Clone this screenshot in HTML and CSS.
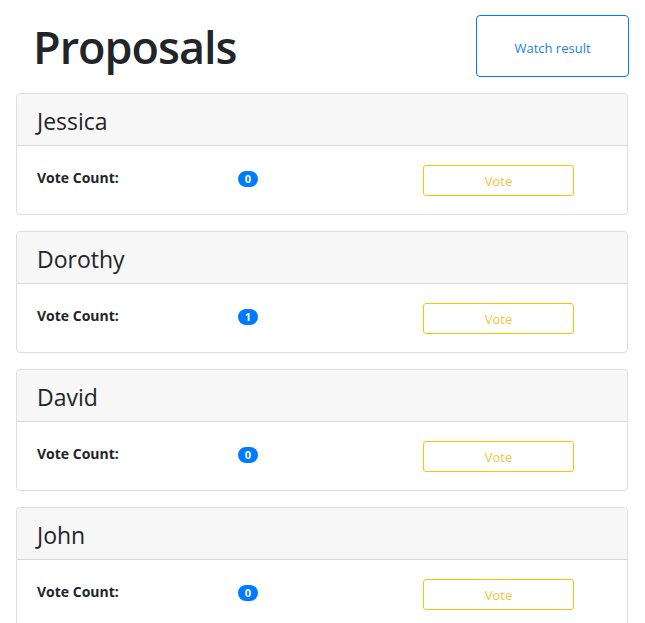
FILE: index.html
```html
<!DOCTYPE html>
<html>
<head>
<meta charset="utf-8">
<link rel="stylesheet" href="styles.css">
</head>
<body>
<div class="page">
  <div class="top">
    <h1 class="title">Proposals</h1>
    <button class="btn-watch">Watch result</button>
  </div>
  <div class="card">
    <div class="card-header"><h4 class="name">Jessica</h4></div>
    <div class="card-body">
      <div class="label">Vote Count:</div>
      <div><span class="badge">0</span></div>
      <div><button class="btn-vote">Vote</button></div>
    </div>
  </div>
  <div class="card">
    <div class="card-header"><h4 class="name">Dorothy</h4></div>
    <div class="card-body">
      <div class="label">Vote Count:</div>
      <div><span class="badge">1</span></div>
      <div><button class="btn-vote">Vote</button></div>
    </div>
  </div>
  <div class="card">
    <div class="card-header"><h4 class="name">David</h4></div>
    <div class="card-body">
      <div class="label">Vote Count:</div>
      <div><span class="badge">0</span></div>
      <div><button class="btn-vote">Vote</button></div>
    </div>
  </div>
  <div class="card">
    <div class="card-header"><h4 class="name">John</h4></div>
    <div class="card-body">
      <div class="label">Vote Count:</div>
      <div><span class="badge">0</span></div>
      <div><button class="btn-vote">Vote</button></div>
    </div>
  </div>
</div>
</body>
</html>
```

FILE: styles.css
```css
* { box-sizing: border-box; }
html, body { margin: 0; padding: 0; background: #fff; }
body {
  font-family: "Open Sans", "Noto Sans", "DejaVu Sans", sans-serif;
  color: #212529;
  font-size: 16px;
}
.page {
  padding: 15px 17px 0 16px;
}
.top {
  display: flex;
  justify-content: space-between;
  align-items: flex-start;
  height: 78px;
}
.title {
  margin: 0;
  padding-left: 17px;
  font-size: 45px;
  font-weight: 600;
  line-height: 64px;
  letter-spacing: -1px;
}
.btn-watch {
  appearance: none;
  width: 153px;
  height: 62px;
  border: 1px solid #007bff;
  border-radius: 4px;
  background: #fff;
  color: #1a7ff0;
  font-family: inherit;
  font-size: 13px;
  padding: 4px 0 0 0;
  margin-right: -1px;
}
.card {
  border: 1px solid rgba(0,0,0,.13);
  border-radius: 4px;
  margin-bottom: 16px;
  overflow: hidden;
}
.card-header {
  background: #f7f7f7;
  border-bottom: 1px solid rgba(0,0,0,.13);
  padding: 14px 20px 0 20px;
  height: 52px;
}
.name {
  margin: 0;
  font-size: 23px;
  font-weight: 500;
  line-height: 27px;
}
.card-body {
  height: 68px;
  padding: 20px 20px 0 20px;
  display: grid;
  grid-template-columns: 201px 185px 151px;
  align-items: start;
}
.label {
  font-size: 14px;
  font-weight: 700;
  line-height: 24px;
}
.badge {
  display: inline-block;
  width: 20px;
  height: 16px;
  margin-top: 5px;
  border-radius: 8px;
  background: #007bff;
  color: #fff;
  font-size: 11px;
  font-weight: 700;
  line-height: 16px;
  text-align: center;
}
.btn-vote {
  appearance: none;
  display: block;
  width: 151px;
  height: 31px;
  margin-top: -1px;
  border: 1px solid #ffc107;
  border-radius: 3px;
  background: #fff;
  color: #f7c340;
  font-family: inherit;
  font-size: 13px;
  padding: 0;
}
```
